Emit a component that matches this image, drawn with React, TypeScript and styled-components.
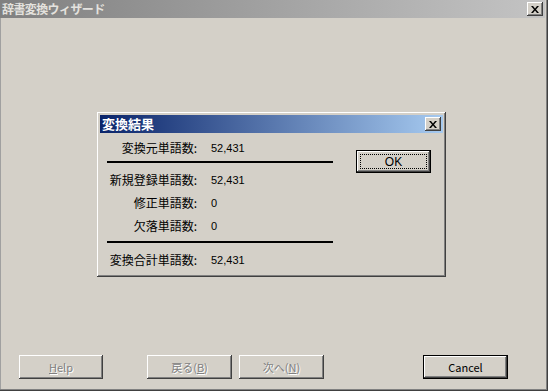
import styled, { createGlobalStyle, css } from 'styled-components'

const GlobalStyle = createGlobalStyle`
    html, body {
        margin: 0;
        padding: 0;
        overflow: hidden;
        background: #d4d0c8;
    }
`

const JP = `"Noto Sans CJK JP", "Liberation Sans", sans-serif`
const LATIN = `"Liberation Sans", "Noto Sans CJK JP", sans-serif`

const raised = css`
    box-shadow:
        inset -1px -1px #404040,
        inset 1px 1px #ffffff,
        inset -2px -2px #808080,
        inset 2px 2px #d4d0c8;
`

const Window = styled.div`
    position: relative;
    box-sizing: border-box;
    width: 548px;
    height: 391px;
    display: flex;
    flex-direction: column;
    background: #d4d0c8;
    padding: 0 3px 3px 2px;
    box-shadow:
        inset -1px -1px #404040,
        inset -2px -2px #808080,
        inset 1px 0 #a0a0a0;
`

const TitleBar = styled.div<{ $active?: boolean }>`
    height: 18px;
    flex: none;
    display: flex;
    align-items: center;
    padding: 0 2px 0 2px;
    margin-left: -2px;
    background: ${p => p.$active
        ? 'linear-gradient(to right, #0a246a, #a6caf0)'
        : 'linear-gradient(to right, #808080, #c4c4c4)'};
`

const TitleText = styled.div<{ $active?: boolean }>`
    flex: 1;
    font-family: ${JP};
    font-weight: bold;
    font-size: ${p => p.$active ? '13px' : '12px'};
    line-height: 18px;
    color: ${p => p.$active ? '#ffffff' : '#e4e2de'};
    letter-spacing: ${p => p.$active ? '0' : '-0.6px'};
    white-space: nowrap;
`

const CloseBox = styled.div`
    width: 16px;
    height: 14px;
    display: flex;
    align-items: center;
    justify-content: center;
    background: #d4d0c8;
    ${raised}
`

const Body = styled.div`
    flex: 1;
    display: flex;
    flex-direction: column;
`

const Stage = styled.div`
    flex: 1;
`

const ButtonBar = styled.div`
    display: flex;
    align-items: center;
    padding: 0 37px 9px 17px;
`

const Button = styled.button<{ $default?: boolean; $gap?: number }>`
    box-sizing: border-box;
    width: ${p => p.$default ? 85 : 85}px;
    height: 24px;
    margin: 0;
    margin-left: ${p => p.$gap ?? 0}px;
    padding: 0;
    border: ${p => p.$default ? '1px solid #000' : 'none'};
    background: #d4d0c8;
    font-family: ${JP};
    font-size: 11px;
    color: #000;
    ${raised}

    &:disabled {
        color: #808080;
        text-shadow: 1px 1px #ffffff;
    }
`

const CancelButton = styled(Button)`
    margin-left: auto;
`

const Ul = styled.span`
    text-decoration: underline;
`

const Overlay = styled.div`
    position: absolute;
    inset: 0;
    display: flex;
    align-items: center;
    justify-content: center;
    padding: 0 5px 2px 0;
`

const Dialog = styled.div`
    box-sizing: border-box;
    width: 349px;
    height: 165px;
    padding: 3px;
    background: #d4d0c8;
    display: flex;
    flex-direction: column;
    ${raised}
`

const DialogBody = styled.div`
    display: flex;
    padding: 3px 12px 3px 7px;
`

const Results = styled.div`
    width: 226px;
`

const Row = styled.div`
    display: grid;
    grid-template-columns: 90px auto;
    column-gap: 14px;
    height: 23px;
    align-items: center;
`

const Label = styled.div`
    font-family: ${JP};
    font-size: 12px;
    line-height: 14px;
    text-align: right;
    white-space: nowrap;
    color: #000;
`

const Value = styled.div`
    font-family: ${LATIN};
    font-size: 11px;
    line-height: 14px;
    color: #000;
`

const Divider = styled.div`
    height: 2px;
    background: #000;
    margin: 2px 0 5px;
`

const OkButton = styled(Button)`
    width: 75px;
    height: 23px;
    margin: 14px 0 0 23px;
    position: relative;
    font-family: ${LATIN};
    font-size: 12px;

    &::after {
        content: '';
        position: absolute;
        inset: 3px;
        border: 1px dotted #000;
    }
`

function CloseIcon() {
    return (
        <svg width="8" height="7" viewBox="0 0 8 7">
            <path d="M0 0h2l2 2.5L6 0h2L5 3.5 8 7H6L4 4.5 2 7H0l3-3.5z" fill="#000" />
        </svg>
    )
}

const results = [
    { label: '変換元単語数:', value: '52,431' },
    { label: '新規登録単語数:', value: '52,431' },
    { label: '修正単語数:', value: '0' },
    { label: '欠落単語数:', value: '0' },
    { label: '変換合計単語数:', value: '52,431' },
]

export default function App() {
    const [first, added, fixed, missing, total] = results
    return (
        <>
            <GlobalStyle />
            <Window>
                <TitleBar>
                    <TitleText>辞書変換ウィザード</TitleText>
                    <CloseBox><CloseIcon /></CloseBox>
                </TitleBar>
                <Body>
                    <Stage />
                    <ButtonBar>
                        <Button disabled style={{ width: 84 }}><Ul>H</Ul>elp</Button>
                        <Button disabled $gap={44}>戻る(<Ul>B</Ul>)</Button>
                        <Button disabled $gap={7}>次へ(<Ul>N</Ul>)</Button>
                        <CancelButton $default>Cancel</CancelButton>
                    </ButtonBar>
                </Body>

                <Overlay>
                    <Dialog>
                        <TitleBar $active style={{ margin: 0 }}>
                            <TitleText $active>変換結果</TitleText>
                            <CloseBox><CloseIcon /></CloseBox>
                        </TitleBar>
                        <DialogBody>
                            <Results>
                                <Row><Label>{first.label}</Label><Value>{first.value}</Value></Row>
                                <Divider />
                                {[added, fixed, missing].map(r => (
                                    <Row key={r.label}><Label>{r.label}</Label><Value>{r.value}</Value></Row>
                                ))}
                                <Divider style={{ marginTop: 4 }} />
                                <Row><Label>{total.label}</Label><Value>{total.value}</Value></Row>
                            </Results>
                            <OkButton $default>OK</OkButton>
                        </DialogBody>
                    </Dialog>
                </Overlay>
            </Window>
        </>
    )
}
